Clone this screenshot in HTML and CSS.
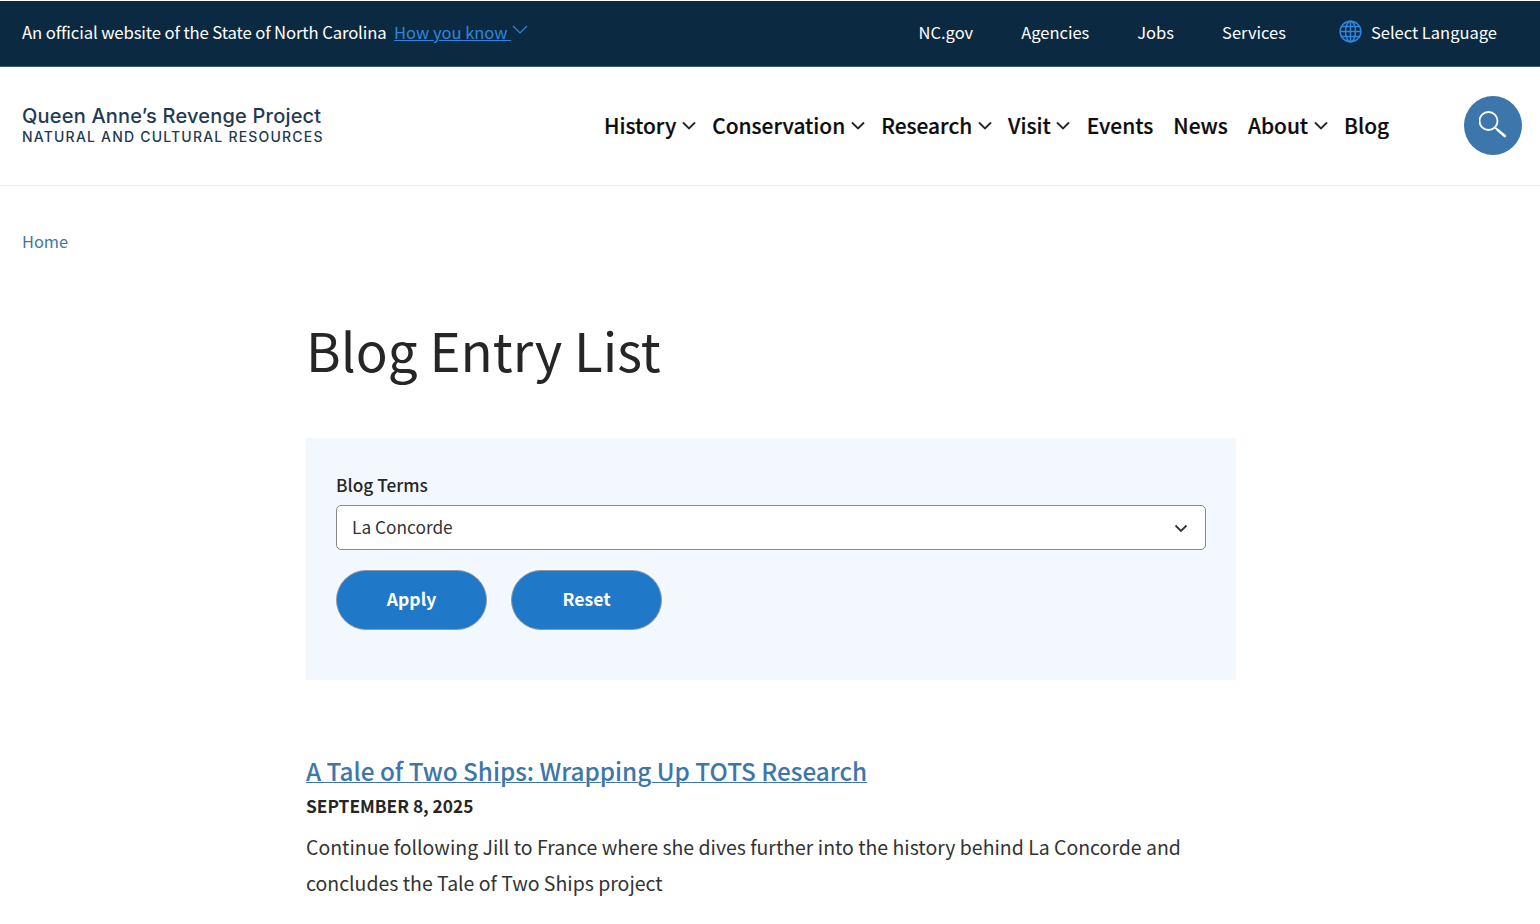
FILE: index.html
```html
<!DOCTYPE html>
<html lang="en">
<head>
<meta charset="utf-8">
<title>Blog Entry List</title>
<link rel="stylesheet" href="styles.css">
</head>
<body>
<div class="topbar">
  <div class="official">
    <span class="official-text">An official website of the State of North Carolina</span>
    <a class="know" href="#">How you know </a>
    <svg class="know-chev" width="16" height="9" viewBox="0 0 16 9"><path d="M1 1l7 7 7-7" fill="none" stroke="#2f86de" stroke-width="1.2"/></svg>
  </div>
  <nav class="toplinks">
    <a href="#">NC.gov</a>
    <a href="#">Agencies</a>
    <a href="#">Jobs</a>
    <a href="#">Services</a>
    <span class="lang">
      <svg width="23" height="23" viewBox="0 0 24 24" fill="none" stroke="#2f86de" stroke-width="1.6"><circle cx="12" cy="12" r="10.8"/><ellipse cx="12" cy="12" rx="5.2" ry="10.8"/><path d="M12 1.2v21.6M1.2 12h21.6M2.8 6.8h18.4M2.8 17.2h18.4"/></svg>
      Select Language
    </span>
  </nav>
</div>
<header class="header">
  <a class="logo" href="#">
    <span class="logo-main">Queen Anne’s Revenge Project</span>
    <span class="logo-sub">NATURAL AND CULTURAL RESOURCES</span>
  </a>
  <nav class="mainnav">
    <a href="#">History<svg class="chev" viewBox="0 0 14 9"><path d="M1 1.5L7 7.5l6-6"/></svg></a>
    <a href="#">Conservation<svg class="chev" viewBox="0 0 14 9"><path d="M1 1.5L7 7.5l6-6"/></svg></a>
    <a href="#">Research<svg class="chev" viewBox="0 0 14 9"><path d="M1 1.5L7 7.5l6-6"/></svg></a>
    <a href="#">Visit<svg class="chev" viewBox="0 0 14 9"><path d="M1 1.5L7 7.5l6-6"/></svg></a>
    <a href="#">Events</a>
    <a href="#">News</a>
    <a href="#">About<svg class="chev" viewBox="0 0 14 9"><path d="M1 1.5L7 7.5l6-6"/></svg></a>
    <a href="#">Blog</a>
  </nav>
  <button class="search" aria-label="Search">
    <svg width="28" height="28" viewBox="0 0 28 28" fill="none" stroke="#fff"><circle cx="9.5" cy="10" r="9" stroke-width="1.8"/><path d="M16.2 16.6l2.6 2.4" stroke-width="1.8"/><path d="M19 19.2l6.8 5.8" stroke-width="2.6" stroke-linecap="round"/></svg>
  </button>
</header>
<div class="breadcrumb"><a href="#">Home</a></div>
<main class="content">
  <h1>Blog Entry List</h1>
  <form class="filter">
    <label class="filter-label">Blog Terms</label>
    <div class="select">
      <span class="select-value">La Concorde</span>
      <svg class="select-chev" width="14" height="9" viewBox="0 0 14 9"><path d="M1.5 1.5L7 7l5.5-5.5" fill="none" stroke="#333" stroke-width="1.8"/></svg>
    </div>
    <div class="actions">
      <button class="btn" type="button">Apply</button>
      <button class="btn" type="button">Reset</button>
    </div>
  </form>
  <article class="entry">
    <h2><a href="#">A Tale of Two Ships: Wrapping Up TOTS Research</a></h2>
    <div class="date">SEPTEMBER 8, 2025</div>
    <p>Continue following Jill to France where she dives further into the history behind La Concorde and concludes the Tale of Two Ships project</p>
  </article>
</main>
</body>
</html>
```
FILE: styles.css
```css
* { box-sizing: border-box; }
html, body { margin: 0; padding: 0; height: 924px; overflow: hidden; }
body {
  background: #fff;
  color: #262626;
  font-family: "Noto Sans CJK SC", "Noto Sans", sans-serif;
  font-size: 19px;
}
a { text-decoration: none; color: inherit; }

.topbar {
  margin-top: 1px;
  height: 66px;
  background: #0b2a42;
  border-bottom: 1px solid #3f5a70;
  color: #fff;
  display: flex;
  align-items: center;
  justify-content: space-between;
  padding: 0 43px 3px 22px;
  font-size: 16.5px;
  line-height: 24px;
}
.official { display: flex; align-items: center; }
.official-text { font-size: 16.7px; letter-spacing: -0.12px; }
.know { color: #2f86de; text-decoration: underline; margin-left: 7.5px; white-space: pre; }
.know-chev { margin: -5px 0 0 1px; }
.toplinks { display: flex; align-items: center; gap: 48px; }
.lang { display: flex; align-items: center; gap: 9px; margin-left: 5px; }
.lang svg { margin-top: -2px; }

.header {
  height: 119px;
  border-bottom: 1px solid #ececec;
  display: flex;
  align-items: center;
  padding: 0 18px 1px 22px;
}
.logo { display: flex; flex-direction: column; width: 582px; color: #1f3a52; font-family: "Inter", sans-serif; flex: none; margin-top: -3px; }
.logo-main { font-size: 20px; line-height: 24px; font-weight: 500; letter-spacing: 0.2px; }
.logo-sub { font-size: 14px; line-height: 17px; font-weight: 500; letter-spacing: 1.2px; }
.mainnav {
  display: flex; align-items: center; gap: 20px;
  font-size: 20.91px; font-weight: 500; color: #0d0d0d;
  flex: 1; line-height: 30px; margin-top: -2px;
  -webkit-text-stroke: 0.2px #0d0d0d;
}
.mainnav a { display: flex; align-items: center; }
.chev { width: 14px; height: 9px; margin: 2px -3.6px 0 5.5px; fill: none; stroke: #262626; stroke-width: 1.9; }
.search {
  width: 58px; height: 59px; border-radius: 50%;
  border: 0; padding: 0; background: #3d76ab;
  display: flex; align-items: center; justify-content: center;
  margin-top: -1px;
}

.breadcrumb { padding: 43px 22px 0; font-size: 16.4px; line-height: 24px; color: #3d76ab; }

.content { margin-left: 306px; width: 930px; }
h1 { margin: 60px 0 0; font-size: 52.85px; line-height: 72px; font-weight: 400; color: #262626; }
.filter {
  margin-top: 53px;
  height: 242px;
  background: #f3f8ff;
  padding: 35px 30px 0;
}
.filter-label { display: block; font-size: 17.3px; line-height: 24px; font-weight: 500; margin-bottom: 8px; }
.select {
  height: 45px;
  background: #fff;
  border: 1px solid #888;
  border-radius: 5px;
  display: flex; align-items: center; justify-content: space-between;
  padding: 0 17px 0 15px;
  font-size: 17.3px;
  color: #333;
}
.select-value { margin-top: -2px; }
.select-chev { margin-top: 1px; }
.actions { display: flex; gap: 24px; margin-top: 20px; }
.btn {
  width: 151px; height: 60px;
  border-radius: 30px;
  border: 1px solid #8e9aa5;
  background: #1f78c8;
  color: #fff;
  font: 700 17.6px/24px "Noto Sans CJK SC", "Noto Sans", sans-serif;
  padding: 0 0 2px;
}
.entry { margin-top: 71px; }
h2 { margin: 0; font-size: 24.3px; line-height: 40px; font-weight: 500; }
h2 a { color: #3d76ab; text-decoration: underline; text-decoration-thickness: 1px; }
.date { font-size: 17.3px; line-height: 28px; font-weight: 700; color: #262626; margin-top: 1px; }
.entry p { margin: 9px 0 0; font-size: 19.48px; line-height: 36px; color: #333; }
```
